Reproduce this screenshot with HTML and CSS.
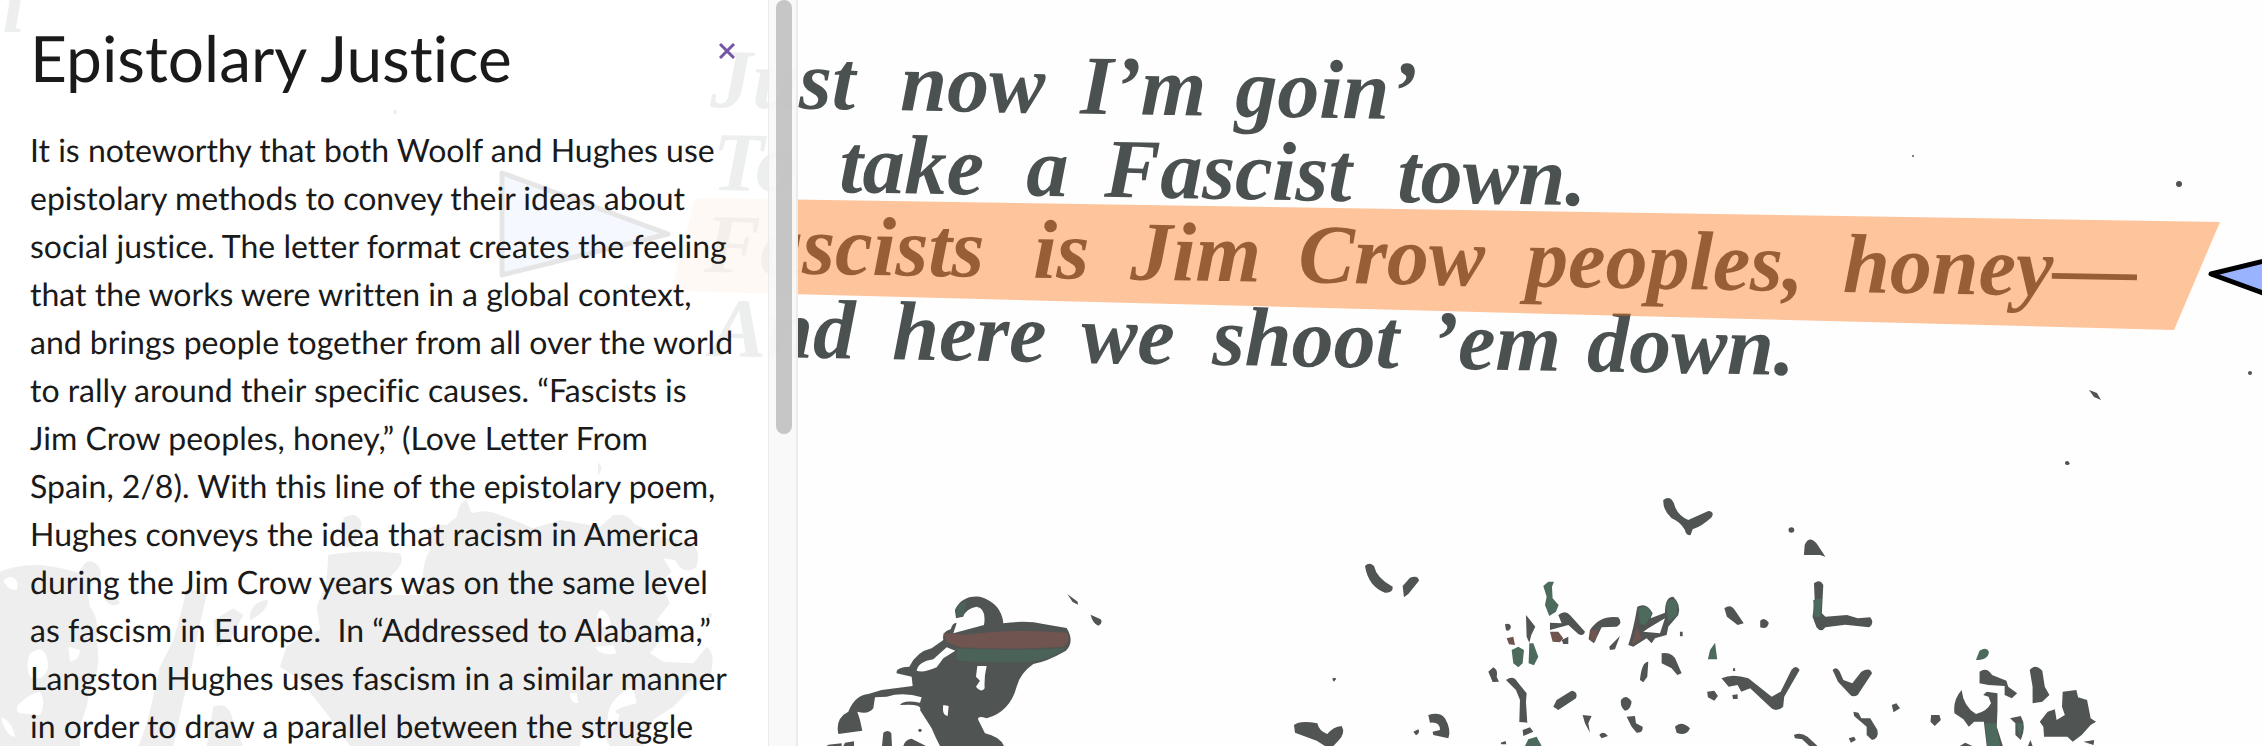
FILE: index.html
```html
<!DOCTYPE html>
<html lang="en">
<head>
<meta charset="utf-8">
<title>Epistolary Justice</title>
<link rel="stylesheet" href="styles.css">
</head>
<body>
<main class="viewer">
  <svg class="page-scan" viewBox="0 0 2262 746" preserveAspectRatio="xMinYMin slice" role="img" aria-label="Scanned poem with an annotated line">
    <!-- verse -->
    <g class="verse">
      <text transform="rotate(1 710 107)" y="107"><tspan x="710">Just</tspan> <tspan x="900">now</tspan> <tspan x="1080">I’m</tspan> <tspan x="1235">goin’</tspan></text>
      <text transform="rotate(1 712 190)" y="190"><tspan x="712">To</tspan> <tspan x="839">take</tspan> <tspan x="1026">a</tspan> <tspan x="1104">Fascist</tspan> <tspan x="1397">town.</tspan></text>
      <text transform="rotate(1 704 272)" y="272"><tspan x="704">Fascists</tspan> <tspan x="1033">is</tspan> <tspan x="1130">Jim</tspan> <tspan x="1298">Crow</tspan> <tspan x="1526">peoples,</tspan> <tspan x="1843">honey—</tspan></text>
      <text transform="rotate(1 710 356)" y="356"><tspan x="710">And</tspan> <tspan x="892">here</tspan> <tspan x="1081">we</tspan> <tspan x="1212">shoot</tspan> <tspan x="1430">’em</tspan> <tspan x="1587">down.</tspan></text>
      <text x="-22" y="32">n</text>
    </g>

    <!-- specks -->
    <g class="ink">
      <circle cx="2179" cy="184" r="3"/>
      <circle cx="1913" cy="156" r="1"/>
      <circle cx="2250" cy="373" r="2"/>
      <path d="M2089 390l8 3 4 7-7-3z"/>
      <circle cx="2067" cy="463" r="2"/>
      <circle cx="395" cy="112" r="2"/>
      <circle cx="1335" cy="679" r="1"/>
      <path d="M598 462l4 6-4 8z"/>
    </g>

    <!-- large figures at the left -->
    <g class="ink" transform="translate(0 540) scale(.3333)">
      <path d="M0 95Q60 70 130 76Q190 84 240 100Q250 60 275 64Q310 80 300 110Q285 130 260 140L270 200Q300 240 290 300Q300 350 290 400Q270 440 260 500L240 560V620H0ZM10 120Q20 150 50 150Q60 115 30 110ZM90 340Q75 380 90 410Q130 430 145 380Q140 320 110 330ZM205 320L210 365Q240 360 240 330ZM60 490Q40 510 60 520L120 525Q140 490 120 455Q90 460 60 490ZM5 540Q20 590 45 590Q40 550 5 530Z" fill-rule="evenodd"/>
      <path d="M560 150Q590 145 620 165L600 250L575 380L550 480L520 620H415Q440 560 455 490L480 380L520 300L545 210Z"/>
      <path d="M315 180Q335 205 360 190L350 172H320ZM750 240Q745 190 805 178Q800 220 750 240ZM640 240L700 205L730 225L690 300L650 320ZM640 500Q690 480 700 550L730 620H620Z"/>
    </g>
    <g class="ink" transform="translate(300 480) scale(.3333)">
      <path d="M85 225Q180 210 245 215L300 220Q320 250 270 290L250 345H370Q360 260 390 210L380 150Q410 130 440 135L470 110Q480 60 500 60L515 100Q560 85 600 105L640 120L700 145L780 120L900 140L940 105Q990 100 1000 130L1080 170L1170 185Q1205 210 1190 260Q1150 290 1125 240L1090 235L1115 275L1080 310L1110 370L1070 420L1110 450L1050 520L1090 545L1180 550L1220 500Q1250 520 1230 590L1160 640L1120 680L1060 720L1030 798H150L80 700L0 600L-60 560L-40 500Q0 470 60 450L50 380L80 300ZM900 390Q880 420 900 440H935Q925 390 900 390ZM885 500Q900 530 950 520L940 495ZM810 640Q810 670 835 670L830 640ZM1000 620Q910 660 925 740Q950 760 960 690L1010 670ZM900 750L845 770L840 798H930Z" fill-rule="evenodd"/>
      <path d="M130 115Q170 90 185 130L165 200H130ZM1225 400h12v12h-12zM950 700Q930 690 1010 670L1010 720Z"/>
    </g>

    <!-- bent figure -->
    <g transform="translate(780 460) scale(.3333)">
      <g class="ink">
        <path d="M525 450Q545 405 600 410Q665 430 670 490Q740 480 790 492L860 504Q885 545 858 572Q800 605 760 612Q720 640 710 680Q690 755 620 775Q590 765 595 780L615 820Q660 830 672 858H480Q465 830 455 805L420 750Q430 730 360 735Q370 718 420 728L425 712Q370 695 320 710L285 712L280 745Q265 765 232 755L240 780L247 812L175 822Q165 775 205 755Q225 705 265 702L305 690L398 678L395 650L350 640Q345 622 388 620Q410 575 455 565L490 540Q485 515 512 508Q520 485 530 490L520 520L612 495Q620 445 590 440Q560 445 548 470L528 475ZM500 562L460 598Q415 605 410 632Q430 640 470 622L490 595L526 572ZM592 618L588 650L600 662L588 680Q605 700 614 685Q612 650 620 618ZM490 735Q485 765 503 768L506 738Z" fill-rule="evenodd"/>
        <path d="M862 402L893 425 894 434 878 426ZM932 464L962 478Q970 490 955 497Q938 490 932 464ZM310 818Q325 808 334 820L336 858H306ZM370 858Q375 838 395 836L438 858ZM145 854L185 850V858H140ZM195 848L222 844V858H190Z"/>
        <circle cx="420" cy="811" r="5"/>
      </g>
      <path class="ink-red" d="M490 520L560 524Q700 505 862 518Q872 545 850 560Q700 570 540 562L500 545Z"/>
      <path class="ink-teal" d="M530 565Q700 575 855 565Q820 600 750 605Q600 610 530 600ZM525 450Q540 425 560 425L550 470 530 472Z"/>
    </g>

    <!-- foliage and birds, middle -->
    <g class="ink" transform="translate(1240 480) scale(.3333)">
      <path d="M1270 60Q1290 45 1302 70Q1310 105 1345 120L1405 93Q1425 95 1415 112Q1385 140 1358 148L1352 165Q1338 168 1335 150Q1320 125 1295 115Q1268 90 1270 60ZM375 258Q388 245 402 258Q410 295 458 320Q460 340 435 338Q385 320 375 258ZM488 318L510 293Q535 285 537 302L505 342 492 352Z"/>
      <path d="M162 735Q180 720 232 730Q238 755 262 762Q280 740 305 738Q318 760 295 782L280 798H255L230 782 165 758ZM565 705Q600 695 615 715Q635 750 625 775L580 765 578 755 600 750Q600 725 570 728ZM520 755L535 748Q542 758 528 766ZM278 593l8 2-2 10-6-4z"/>
      <path d="M745 575L760 562Q775 570 770 590L777 605 758 606ZM798 600Q820 585 832 605L860 640 858 665 862 728 838 726 840 660 828 630ZM848 750L870 742 880 755 850 768ZM795 433q15-5 18 8-5 15-15 10zM858 405L872 422 886 440 874 465 868 488 860 470ZM955 405Q975 388 990 405L1035 455Q1030 470 1015 462L985 435 930 450V428L965 430Z"/>
      <path d="M1050 450Q1080 405 1135 412Q1150 430 1130 440L1085 442 1062 490 1046 478ZM1108 500L1140 468 1125 508 1110 510ZM1165 495Q1180 450 1192 380Q1220 365 1238 400L1232 415 1275 398Q1275 350 1300 350Q1325 375 1315 405L1285 440 1280 465 1245 475 1235 490 1220 475 1180 500ZM1275 415L1225 445 1210 455 1260 460Z" fill-rule="evenodd"/>
      <path d="M1200 600Q1205 545 1225 545L1222 590 1210 607ZM1265 520Q1300 515 1310 545L1325 580 1312 585 1295 565 1265 550ZM940 680L950 660 995 632Q1015 635 1008 655L955 690ZM1143 660Q1158 640 1175 665Q1172 690 1155 692 1140 680 1143 660ZM1160 710L1185 708 1188 730 1208 740Q1210 760 1190 758L1175 740ZM1305 740Q1325 720 1350 745 1340 770 1310 758ZM1028 705L1055 708 1045 730 1050 758 1035 730ZM1078 765Q1090 750 1104 768L1085 775ZM1320 455h8v14h-8zM782 788l15-5 2 10h-15zM965 480l20-10v22h-15z"/>
    </g>
    <g class="ink-green" transform="translate(1240 480) scale(.3333)">
      <path d="M910 318L925 305 942 305 936 320 938 355 956 375 948 395 928 408 915 375 920 350ZM815 510L835 500 852 510 848 550 835 562 820 550ZM868 490L880 490 895 530 882 556 866 550ZM855 798L865 778 890 770 905 798ZM1195 385Q1230 370 1235 405L1215 435 1200 430ZM1278 370Q1300 345 1312 370V405L1285 425Z"/>
    </g>
    <g class="ink-red" transform="translate(1240 480) scale(.3333)">
      <path d="M930 455L955 455 970 475 960 487 938 485ZM1050 450L1075 450 1065 485 1050 480ZM1190 440L1205 475 1175 495ZM800 475l20-5 5 25-18-2z"/>
    </g>

    <!-- foliage and birds, right -->
    <g class="ink" transform="translate(1700 440) scale(.3584 .3333)">
      <circle cx="1026" cy="70" r="5"/>
      <circle cx="255" cy="270" r="8"/>
      <path d="M290 345L292 315Q305 285 325 310L350 350 335 345ZM318 430Q335 415 344 435L340 520 350 530 410 525 440 535 475 532Q488 550 472 562L405 554 350 562Q338 580 325 562L314 530 320 480ZM68 505Q85 490 97 510L122 550 105 555 75 530ZM168 542Q180 530 192 548 188 570 168 562Z"/>
      <path d="M60 715Q90 700 135 715L200 770 225 755 255 690Q268 672 278 690L235 770 232 800Q210 820 195 800L140 745 115 755 105 735 80 740ZM20 755L40 752 50 768 40 782 22 772ZM90 765l15-2v14h-13zM92 685h6v8h-6zM370 690Q380 678 390 695L400 720 425 730 450 695Q475 680 480 700L440 765Q425 775 415 760L385 725Z"/>
      <path d="M428 815L442 818 450 835 475 835 495 870Q500 895 480 900L465 885 465 860 430 828ZM535 795L548 790 558 805 540 817ZM645 825L668 825 672 840 655 858 643 845ZM262 885Q280 875 300 890L328 918H305L285 898 265 895ZM415 895l15-5 5 10-14 8z"/>
      <path d="M730 750Q735 800 770 822Q800 815 812 790L805 770 790 765 800 755 830 760 830 810 828 860 845 918H800L792 845 765 845 750 860 735 838 710 820Q705 780 730 750ZM780 695Q800 680 815 705L855 722 860 740 885 760 870 775 850 765 850 738 805 735 780 730ZM920 690Q935 670 955 692L962 740 975 765 955 785 928 790 928 740ZM865 835L895 828Q912 860 895 900L880 885V850ZM1012 755L1050 750 1055 772 1080 780 1090 835 1105 845 1090 855 1065 885 1040 905 1025 890 960 890 958 860 948 845 970 815 990 808 995 840 1018 825 1010 800ZM1070 905L1100 900 1098 915ZM725 918L740 908 760 918ZM915 918L922 900 928 918Z"/>
    </g>
    <g class="ink-green" transform="translate(1700 440) scale(.3584 .3333)">
      <path d="M770 660L780 632Q800 620 806 635Q805 660 770 660ZM22 658L28 630 42 608 48 658ZM795 850L825 850 838 918H802ZM882 850L902 850 892 895ZM316 480L340 475 336 530 318 530Z"/>
    </g>

    <!-- annotation and its markers -->
    <polygon class="highlight" points="695,198 2220,222 2174,330 671,291"/>
    <polygon class="marker" points="502,173 668,234 502,275"/>
    <polygon class="marker" points="2211,274 2378,233 2378,335"/>
  </svg>

  <aside class="panel">
    <article class="note">
      <header class="note-header">
        <h1 class="note-title">Epistolary Justice</h1>
        <button class="close" type="button" aria-label="Close">
          <svg class="close-icon" viewBox="0 0 16 16" aria-hidden="true"><path d="M1 1l14 14M15 1L1 15"/></svg>
        </button>
      </header>
      <p class="note-text">It is noteworthy that both Woolf and Hughes use epistolary methods to convey their ideas about social justice. The letter format creates the feeling that the works were written in a global context, and brings people together from all over the world to rally around their specific causes. “Fascists is Jim Crow peoples, honey,” (Love Letter From Spain, 2/8). With this line of the epistolary poem, Hughes conveys the idea that racism in America during the Jim Crow years was on the same level as fascism in Europe.&nbsp; In “Addressed to Alabama,” Langston Hughes uses fascism in a similar manner in order to draw a parallel between the struggle</p>
    </article>
    <div class="track"><div class="thumb"></div></div>
  </aside>
</main>
</body>
</html>
```
FILE: styles.css
```css
* {
  box-sizing: border-box;
}

body {
  margin: 0;
  background: #fefefe;
  color: #1a1a1a;
  font-family: Lato, "Open Sans", sans-serif;
  font-variant-ligatures: none;
  text-rendering: geometricPrecision;
}

.viewer {
  position: relative;
  height: 100vh;
  overflow: hidden;
}

.page-scan {
  display: block;
  width: 100%;
  height: 100%;
}

.verse {
  fill: #4b5050;
  font: italic bold 84px "Liberation Serif", serif;
}

.ink {
  fill: #505453;
}

.ink-green {
  fill: #4c6b5c;
}

.ink-teal {
  fill: #4b6259;
}

.ink-red {
  fill: #70544f;
}

.highlight {
  fill: rgba(255, 117, 19, 0.42);
}

.marker {
  fill: #99b3ff;
  stroke: #000;
  stroke-width: 5;
  stroke-linejoin: round;
}

.panel {
  position: absolute;
  top: 0;
  bottom: 0;
  left: 0;
  display: flex;
  width: 35.3%;
  overflow: hidden;
  background: rgba(255, 255, 255, 0.9);
}

.note {
  flex: 1;
  padding: 18px 30px 0 30px;
}

.note-header {
  display: flex;
  align-items: flex-start;
  justify-content: space-between;
}

.note-title {
  margin: 0;
  font-size: 64px;
  font-weight: 400;
  line-height: 80px;
}

.close {
  display: flex;
  margin-top: 22px;
  padding: 3px;
  border: 0;
  background: none;
  cursor: pointer;
}

.close-icon {
  width: 16px;
  height: 16px;
  fill: none;
  stroke: #7357a5;
  stroke-width: 3;
}

.note-text {
  margin: 28px 0 0;
  font-size: 32px;
  line-height: 48px;
}

.track {
  flex: none;
  width: 30px;
  padding: 0 6px 0 7px;
  border: solid #ebebeb;
  border-width: 0 2px 0 1px;
  background: rgba(248, 248, 248, 0.8);
}

.thumb {
  width: 16px;
  height: 58.2%;
  border-radius: 8px;
  background: rgba(180, 180, 180, 0.75);
}
```
